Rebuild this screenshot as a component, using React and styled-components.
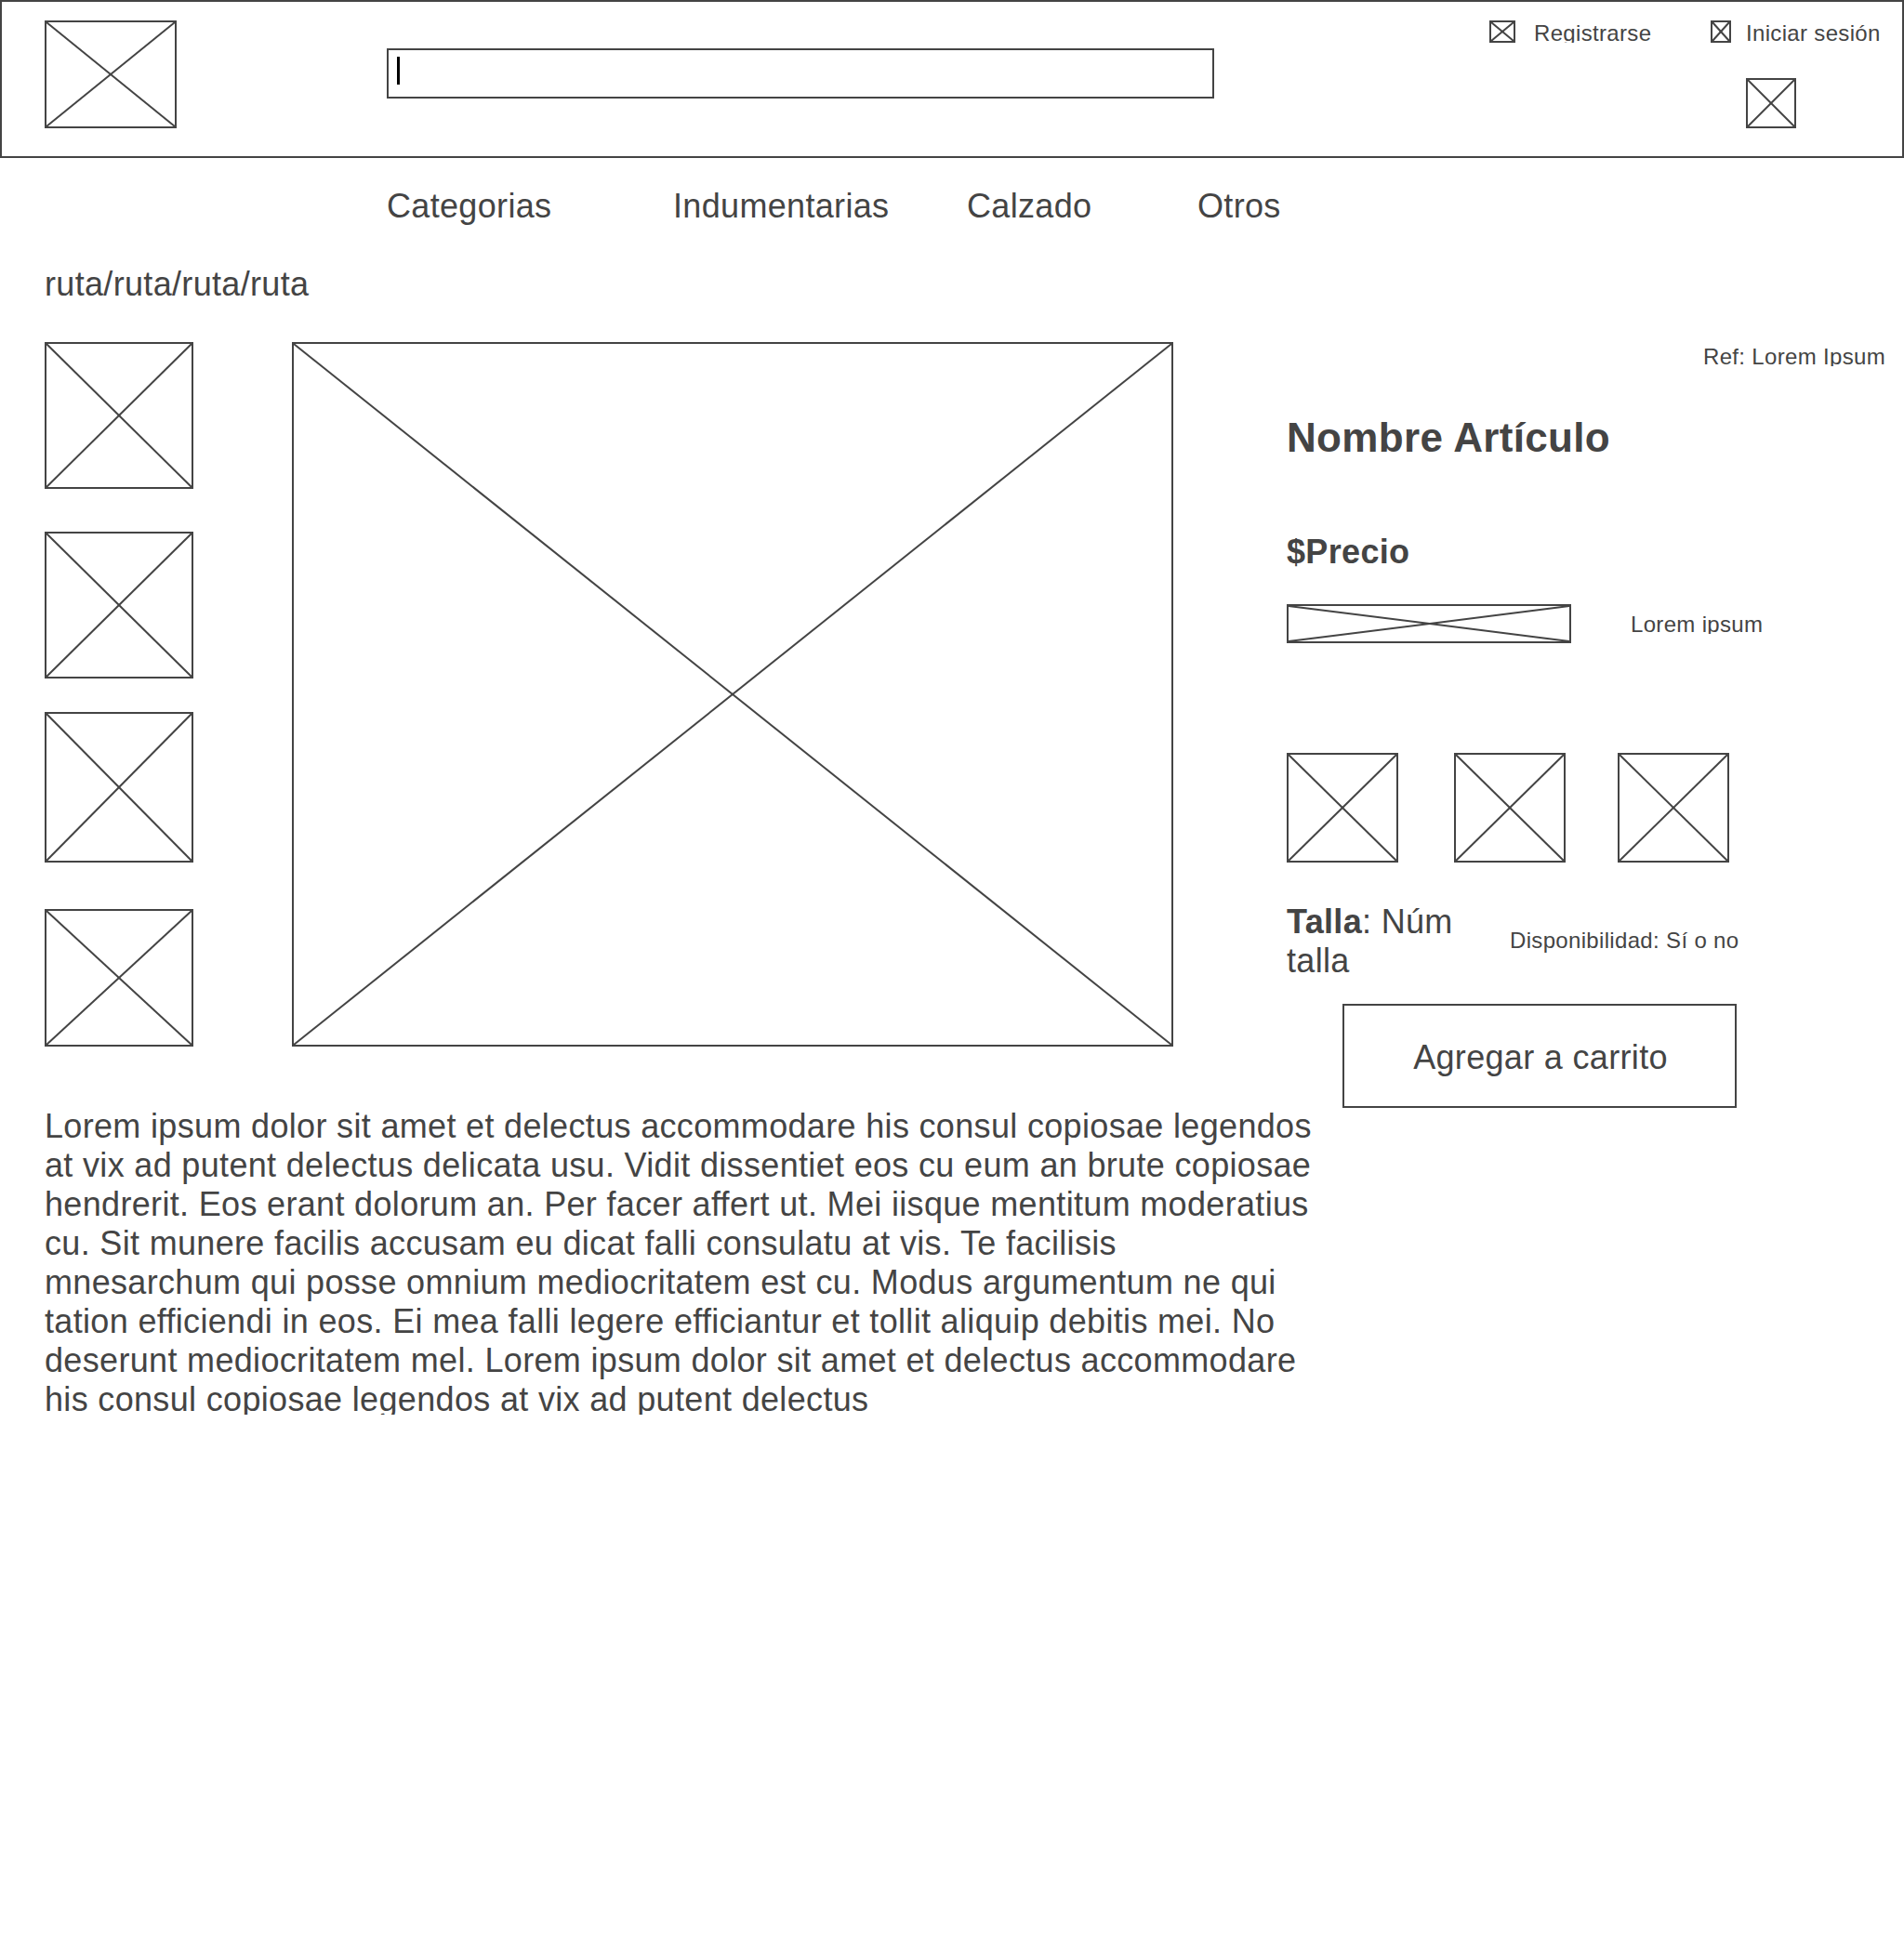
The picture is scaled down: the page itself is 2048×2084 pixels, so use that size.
import React from "react";
import styled, { createGlobalStyle } from "styled-components";

const INK = "#444444";

const GlobalStyle = createGlobalStyle`
  *, *::before, *::after { box-sizing: border-box; }
  body {
    margin: 0;
    background: #ffffff;
    color: ${INK};
    font-family: "Liberation Sans", Arial, Helvetica, sans-serif;
  }
  h1, p, a { margin: 0; color: inherit; text-decoration: none; }
`;

const Page = styled.div`
  width: 2048px;
  min-height: 2084px;
  display: flex;
  flex-direction: column;
`;

const Body = styled.p`
  font-size: 36px;
  line-height: 42px;
  letter-spacing: 0.33px;
`;

const Small = styled.p`
  height: ${(p) => p.$height || 24}px;
  overflow: hidden;
  font-size: 24px;
  line-height: 28px;
  letter-spacing: 0.33px;
  white-space: nowrap;
`;

/* Image placeholder: an outlined box crossed by its diagonals */
const Frame = styled.div`
  flex: none;
  width: ${(p) => p.$w}px;
  height: ${(p) => p.$h}px;
  border: 2px solid ${INK};

  svg {
    display: block;
    width: 100%;
    height: 100%;
    overflow: visible;
    stroke: ${INK};
    stroke-width: 2;
  }
`;

function ImageBox({ w, h, className }) {
  return (
    <Frame $w={w} $h={h} className={className}>
      <svg aria-hidden="true">
        <line x1="0" y1="0" x2="100%" y2="100%" />
        <line x1="100%" y1="0" x2="0" y2="100%" />
      </svg>
    </Frame>
  );
}

const Header = styled.header`
  display: flex;
  align-items: flex-start;
  height: 170px;
  padding: 20px 0 0 46px;
  border: 2px solid ${INK};
`;

const Search = styled.div`
  width: 890px;
  height: 54px;
  margin: 30px 0 0 226px;
  padding: 7px 9px;
  border: 2px solid ${INK};
`;

const Caret = styled.div`
  width: 3px;
  height: 30px;
  background: #000000;
`;

const Actions = styled.div`
  display: flex;
  flex-direction: column;
  gap: 38px;
  margin-left: 296px;
`;

const AuthLinks = styled.nav`
  display: grid;
  grid-template-columns: 238px 200px;
`;

const AuthLink = styled.a`
  display: flex;
  gap: ${(p) => p.$gap}px;
`;

const Cart = styled(ImageBox)`
  margin-left: 276px;
`;

const Menu = styled.nav`
  display: grid;
  grid-template-columns: 308px 316px 248px auto;
  padding: 31px 0 0 416px;
`;

const Breadcrumb = styled(Body)`
  padding: 42px 0 41px 48px;
`;

const Main = styled.main`
  display: grid;
  grid-template-columns: 1336px 664px;
  padding-left: 48px;
`;

const Gallery = styled.section`
  display: flex;
  justify-content: space-between;
  width: 1214px;
  height: 758px;
`;

const Thumbs = styled.div`
  display: grid;
  grid-template-rows: 204px 194px 212px 148px;
`;

const Description = styled(Body)`
  width: 1367px;
  height: 331px;
  margin-top: 65px;
  overflow: hidden;
`;

const Details = styled.section`
  display: flex;
  flex-direction: column;
  align-items: flex-start;
  height: 824px;
  padding-top: 2px;
`;

const Reference = styled(Small)`
  align-self: flex-end;
  width: 216px;
`;

const Title = styled.h1`
  margin-top: 52px;
  font-size: 44px;
  line-height: 50px;
  letter-spacing: 0.33px;
`;

const Price = styled(Body)`
  margin-top: 77px;
  font-weight: bold;
`;

const Rating = styled.div`
  display: flex;
  align-items: flex-start;
  gap: 64px;
  margin-top: 35px;
  ${Small} { margin-top: 8px; }
`;

const Options = styled.div`
  display: grid;
  grid-template-columns: 180px 176px 120px;
  margin-top: 118px;
`;

const SizeRow = styled.div`
  display: grid;
  grid-template-columns: 190px auto;
  column-gap: 50px;
  margin-top: 43px;
  ${Small} { margin-top: 27px; }
`;

const AddButton = styled.button`
  width: 424px;
  height: 112px;
  margin: 25px 0 0 60px;
  padding: 4px 0 0 2px;
  border: 2px solid ${INK};
  background: transparent;
  color: inherit;
  font: 36px/42px "Liberation Sans", Arial, sans-serif;
  letter-spacing: 0.33px;
`;

const menuItems = ["Categorias", "Indumentarias", "Calzado", "Otros"];
const thumbHeights = [158, 158, 162, 148];

export default function App() {
  return (
    <>
      <GlobalStyle />
      <Page>
        <Header>
          <ImageBox w={142} h={116} />
          <Search>
            <Caret />
          </Search>
          <Actions>
            <AuthLinks>
              <AuthLink $gap={20}>
                <ImageBox w={28} h={24} />
                <Small as="span">Registrarse</Small>
              </AuthLink>
              <AuthLink $gap={16}>
                <ImageBox w={22} h={24} />
                <Small as="span">Iniciar sesión</Small>
              </AuthLink>
            </AuthLinks>
            <Cart w={54} h={54} />
          </Actions>
        </Header>

        <Menu>
          {menuItems.map((item) => (
            <Body as="a" key={item}>{item}</Body>
          ))}
        </Menu>

        <Breadcrumb>ruta/ruta/ruta/ruta</Breadcrumb>

        <Main>
          <div>
            <Gallery>
              <Thumbs>
                {thumbHeights.map((h, i) => (
                  <ImageBox key={i} w={160} h={h} />
                ))}
              </Thumbs>
              <ImageBox w={948} h={758} />
            </Gallery>
            <Description>
              Lorem ipsum dolor sit amet et delectus accommodare his consul
              copiosae legendos at vix ad putent delectus delicata usu. Vidit
              dissentiet eos cu eum an brute copiosae hendrerit. Eos erant
              dolorum an. Per facer affert ut. Mei iisque mentitum moderatius
              cu. Sit munere facilis accusam eu dicat falli consulatu at vis.
              Te facilisis mnesarchum qui posse omnium mediocritatem est cu.
              Modus argumentum ne qui tation efficiendi in eos. Ei mea falli
              legere efficiantur et tollit aliquip debitis mei. No deserunt
              mediocritatem mel. Lorem ipsum dolor sit amet et delectus
              accommodare his consul copiosae legendos at vix ad putent
              delectus
            </Description>
          </div>

          <Details>
            <Reference>Ref: Lorem Ipsum</Reference>
            <Title>Nombre Artículo</Title>
            <Price>$Precio</Price>
            <Rating>
              <ImageBox w={306} h={42} />
              <Small>Lorem ipsum</Small>
            </Rating>
            <Options>
              <ImageBox w={120} h={118} />
              <ImageBox w={120} h={118} />
              <ImageBox w={120} h={118} />
            </Options>
            <SizeRow>
              <Body>
                <b>Talla</b>: Núm talla
              </Body>
              <Small $height={28}>Disponibilidad: Sí o no</Small>
            </SizeRow>
            <AddButton>Agregar a carrito</AddButton>
          </Details>
        </Main>
      </Page>
    </>
  );
}
